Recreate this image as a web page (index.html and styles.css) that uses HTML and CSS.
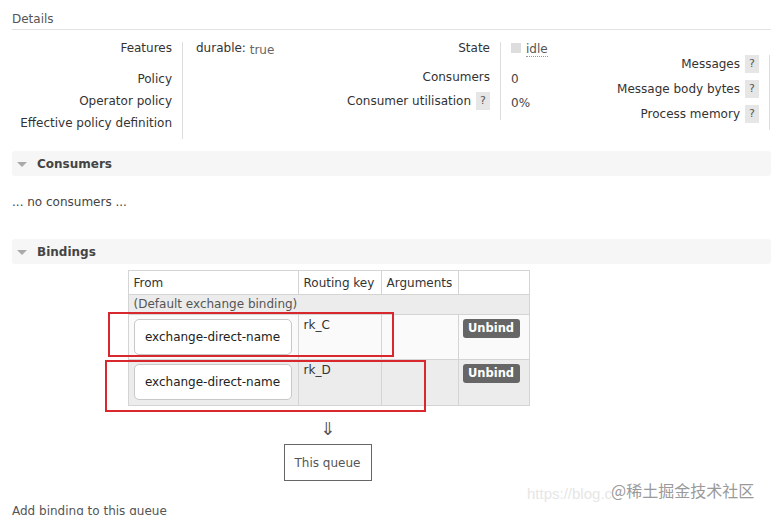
FILE: index.html
```html
<!DOCTYPE html>
<html>
<head>
<meta charset="utf-8">
<link rel="stylesheet" href="styles.css">
</head>
<body>
<div class="page">
  <h3 class="details-title">Details</h3>
  <div class="details">
    <div class="facts facts-a">
      <div class="lbl r1">Features</div>
      <div class="val r1"><span class="key">durable:</span> <span class="tval">true</span></div>
      <div class="lbl r2">Policy</div>
      <div class="val r2"></div>
      <div class="lbl r2">Operator policy</div>
      <div class="val r2"></div>
      <div class="lbl r2">Effective policy definition</div>
      <div class="val r2"></div>
    </div>
    <div class="facts facts-b">
      <div class="lbl b1">State</div>
      <div class="val b1"><span class="state-box"></span><span class="idle">idle</span></div>
      <div class="lbl b2">Consumers</div>
      <div class="val b2 low">0</div>
      <div class="lbl b3"><span class="hl">Consumer utilisation</span><span class="help">?</span></div>
      <div class="val b3 low3">0%</div>
    </div>
    <div class="facts-c">
      <div class="crow"><span>Messages</span><span class="help">?</span></div>
      <div class="crow"><span>Message body bytes</span><span class="help">?</span></div>
      <div class="crow"><span>Process memory</span><span class="help">?</span></div>
    </div>
  </div>

  <div class="section-band"><span class="tri"></span><span class="band-title">Consumers</span></div>
  <p class="none">... no consumers ...</p>

  <div class="section-band band2"><span class="tri"></span><span class="band-title">Bindings</span></div>

  <div class="bind-wrap">
    <table class="bindings">
      <thead>
        <tr><th class="c1">From</th><th class="c2">Routing key</th><th class="c3">Arguments</th><th class="c4"></th></tr>
      </thead>
      <tbody>
        <tr class="default-row"><td colspan="4">(Default exchange binding)</td></tr>
        <tr class="row-a">
          <td><span class="ex-box">exchange-direct-name</span></td>
          <td>rk_C</td>
          <td></td>
          <td><span class="unbind">Unbind</span></td>
        </tr>
        <tr class="row-b">
          <td><span class="ex-box">exchange-direct-name</span></td>
          <td>rk_D</td>
          <td></td>
          <td><span class="unbind">Unbind</span></td>
        </tr>
      </tbody>
    </table>
    <div class="arrow">&#8659;</div>
    <div class="this-queue">This queue</div>
    <div class="mark mark1"></div>
    <div class="mark mark2"></div>
  </div>

  <h3 class="add-title">Add binding to this queue</h3>
</div>
<div class="wm-url">https://blog.c</div>
<div class="wm-cn">@稀土掘金技术社区</div>
</body>
</html>
```

FILE: styles.css
```css
html, body {
  margin: 0;
  padding: 0;
  background: #fff;
}
body {
  font-family: "DejaVu Sans", Verdana, sans-serif;
  font-size: 12px;
  color: #444;
  width: 771px;
  height: 515px;
  overflow: hidden;
  position: relative;
}
.page {
  padding-left: 12px;
}
.details-title {
  margin: 12px 0 0 0;
  font-size: 12px;
  font-weight: normal;
  line-height: 14px;
  color: #555;
  padding-bottom: 3px;
  border-bottom: 1px solid #e2e2e2;
}
.details {
  display: flex;
  align-items: flex-start;
  margin-top: 12px;
}
.facts {
  display: grid;
}
.facts-a {
  width: 330px;
  grid-template-columns: 170px 1fr;
  grid-template-rows: 31px 22px 22px 22px;
}
.facts-b {
  grid-template-columns: 158px 80px;
  grid-template-rows: 29px 21px 28px;
}
.lbl {
  text-align: right;
  padding-right: 10px;
  line-height: 13px;
  color: #333;
  white-space: nowrap;
}
.val {
  border-left: 1px solid #ddd;
  padding-left: 13px;
  line-height: 13px;
  color: #444;
  white-space: nowrap;
}
.facts-b .val {
  padding-left: 10px;
}
.key { color: #333; }
.tval {
  color: #666;
  position: relative;
  top: 2px;
}
.state-box {
  display: inline-block;
  width: 10px;
  height: 10px;
  background: #ddd;
  vertical-align: top;
  margin-right: 5px;
  margin-top: 1px;
}
.idle {
  color: #555;
  display: inline-block;
  line-height: 13px;
  margin-top: 1px;
  border-bottom: 1px dotted #999;
}
.low { padding-top: 2px; }
.b3.lbl {
  display: flex;
  justify-content: flex-end;
  align-items: center;
  height: 18px;
  line-height: 18px;
}
.low3 {
  padding-top: 2px;
  line-height: 18px;
}
.help {
  display: inline-block;
  width: 14px;
  height: 18px;
  line-height: 18px;
  text-align: center;
  background: #e6e6e6;
  color: #555;
  margin-left: 5px;
  font-size: 11px;
}
.facts-c {
  margin-left: auto;
  margin-right: 1px;
  margin-top: 13px;
  padding-right: 10px;
  border-right: 1px solid #ddd;
  display: flex;
  flex-direction: column;
  align-items: flex-end;
}
.crow {
  height: 25px;
  display: flex;
  align-items: flex-start;
  line-height: 18px;
  color: #333;
}
.section-band {
  margin-top: 12px;
  height: 25px;
  background: #f6f6f6;
  border-radius: 3px;
  display: flex;
  align-items: center;
  padding-left: 5px;
}
.band2 {
  margin-top: 0;
}
.tri {
  width: 0;
  height: 0;
  border-left: 5px solid transparent;
  border-right: 5px solid transparent;
  border-top: 5px solid #aaa;
  margin-right: 10px;
  margin-top: 1px;
}
.band-title {
  font-weight: bold;
  font-size: 12px;
  color: #444;
}
.none {
  margin: 19px 0 0 0;
  line-height: 14px;
  height: 44px;
  color: #444;
}
.bind-wrap {
  position: relative;
  margin-left: 116px;
  margin-top: 6px;
  width: 401px;
  display: flex;
  flex-direction: column;
  align-items: center;
}
.bindings {
  border-collapse: collapse;
  width: 401px;
  table-layout: fixed;
}
.bindings th, .bindings td {
  border: 1px solid #d4d4d4;
  text-align: left;
  vertical-align: top;
  padding: 4px 5px;
  color: #333;
  font-weight: normal;
  white-space: nowrap;
}
.bindings th {
  height: 15px;
  line-height: 17px;
  padding: 4px 5px 2px 5px;
  background: #fff;
}
.c1 { width: 159px; }
.c2 { width: 72px; }
.c3 { width: 66px; }
.c4 { width: 60px; }
.default-row td {
  background: #ececec;
  color: #555;
  padding: 2px 5px;
  line-height: 15px;
  height: 15px;
}
.row-a td {
  background: #fafafa;
  height: 36px;
}
.row-b td {
  background: #ececec;
  height: 37px;
}
.ex-box {
  display: flex;
  align-items: center;
  justify-content: center;
  width: 156px;
  height: 34px;
  background: #fff;
  border: 1px solid #c8c8c8;
  border-radius: 5px;
  color: #222;
  font-size: 12px;
}
.bindings td:nth-child(2) {
  padding-top: 4px;
  line-height: 12px;
}
.unbind {
  display: inline-block;
  width: 57px;
  height: 19px;
  line-height: 19px;
  text-align: center;
  background: #666;
  color: #fff;
  font-weight: bold;
  font-size: 11.5px;
  border-radius: 3px;
  margin-left: -1px;
}
.arrow {
  margin-top: 13px;
  font-size: 18px;
  line-height: 20px;
  color: #555;
  margin-left: -2px;
}
.this-queue {
  margin-top: 5px;
  width: 86px;
  height: 35px;
  border: 1px solid #666;
  display: flex;
  align-items: center;
  justify-content: center;
  font-size: 12px;
  color: #555;
  margin-left: -2px;
}
.mark {
  position: absolute;
  border: 2px solid #d9272e;
  box-sizing: border-box;
}
.mark1 {
  left: -20px;
  top: 42px;
  width: 286px;
  height: 45px;
}
.mark2 {
  left: -23px;
  top: 90px;
  width: 321px;
  height: 52px;
}
.add-title {
  margin: 23px 0 0 0;
  font-size: 12px;
  font-weight: normal;
  color: #555;
  line-height: 14px;
}
.wm-url {
  position: absolute;
  left: 527px;
  top: 485px;
  font-family: "Liberation Sans", Arial, sans-serif;
  font-size: 15px;
  color: #e6e6e6;
}
.wm-cn {
  position: absolute;
  left: 611px;
  top: 480px;
  font-family: "Noto Sans CJK SC", sans-serif;
  font-size: 16px;
  line-height: 20px;
  color: #9a9a9a;
  text-shadow: 0 0 2px #fff;
}
```
